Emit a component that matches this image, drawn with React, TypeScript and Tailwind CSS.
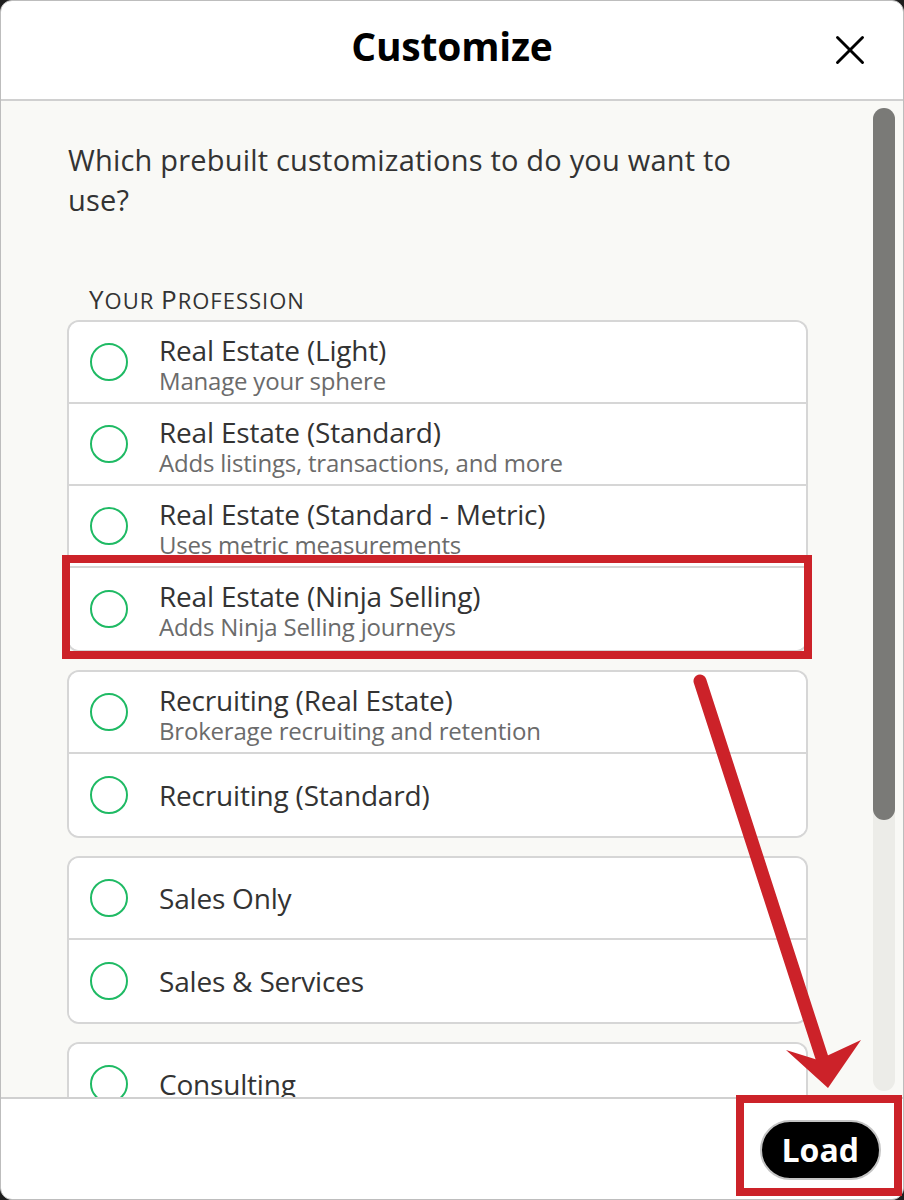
import { X } from "lucide-react";

type Option = { title: string; sub?: string };

const groups: Option[][] = [
  [
    { title: "Real Estate (Light)", sub: "Manage your sphere" },
    { title: "Real Estate (Standard)", sub: "Adds listings, transactions, and more" },
    { title: "Real Estate (Standard - Metric)", sub: "Uses metric measurements" },
    { title: "Real Estate (Ninja Selling)", sub: "Adds Ninja Selling journeys" },
  ],
  [
    { title: "Recruiting (Real Estate)", sub: "Brokerage recruiting and retention" },
    { title: "Recruiting (Standard)" },
  ],
  [{ title: "Sales Only" }, { title: "Sales & Services" }],
  [{ title: "Consulting" }, { title: "Coaching" }],
];

function OptionRow({ item }: { item: Option }) {
  return (
    <div className="h-[82px] flex items-center border-b-2 border-[#d6d6d6] last:border-b-0 bg-white">
      <div className="ml-[21px] w-[38px] h-[38px] shrink-0 rounded-full border-[2.5px] border-[#1fba64]" />
      {item.sub ? (
        <div className="ml-[31px] self-start pt-[11px] flex flex-col">
          <span className="text-[28px] leading-[34px] text-[#333] tracking-[-0.2px]">{item.title}</span>
          <span className="text-[24px] leading-[28px] text-[#6b6b6b] tracking-[-0.2px]">{item.sub}</span>
        </div>
      ) : (
        <span className="ml-[31px] text-[28px] leading-[34px] text-[#333] tracking-[-0.2px]">{item.title}</span>
      )}
    </div>
  );
}

export default function App() {
  return (
    <div className="relative w-[904px] h-[1200px] bg-[#1e1e1e] font-['Open_Sans',sans-serif]">
      <div className="w-full h-full rounded-[12px] border border-[#bdbdbd] bg-white flex flex-col overflow-hidden">
        {/* header */}
        <div className="relative h-[100px] shrink-0 border-b-2 border-[#d0d0d0] flex items-center justify-center">
          <h1 className="text-[39px] font-bold text-black tracking-[-0.2px] -mt-[8px]">Customize</h1>
          <button className="absolute right-[28px] top-[24px] text-black">
            <X size={50} strokeWidth={1.4} />
          </button>
        </div>

        {/* body */}
        <div className="h-[996px] shrink-0 bg-[#f9f9f6] flex overflow-hidden">
          <div className="pl-[67px] w-[806px] shrink-0 pt-[39px]">
            <p className="max-w-[690px] text-[29px] leading-[40px] text-[#333] tracking-[0.2px]">
              Which prebuilt customizations to do you want to use?
            </p>
            <div className="mt-[66px] mb-[9px] pl-[21px] text-[22px] leading-[26px] text-[#333] tracking-[1px]">
              <span className="text-[26px]">Y</span>OUR <span className="text-[26px]">P</span>ROFESSION
            </div>
            <div className="flex flex-col gap-[22px] px-[1px]">
              {groups.map((g, i) => (
                <div key={i} className="rounded-[10px] ring-2 ring-[#d6d6d6] overflow-hidden bg-white">
                  {g.map((item) => (
                    <OptionRow key={item.title} item={item} />
                  ))}
                </div>
              ))}
            </div>
          </div>
          <div className="ml-auto mr-[8px] mt-[7px] mb-[6px] w-[22px] rounded-full bg-[#ececE8] flex flex-col">
            <div className="h-[712px] rounded-full bg-[#7a7a77]" />
          </div>
        </div>

        {/* footer */}
        <div className="flex-1 border-t-2 border-[#d0d0d0] flex items-center justify-end pr-[22px]">
          <button className="h-[60px] px-[20px] rounded-full bg-black border-2 border-[#c4c4c4] text-white text-[32px] font-bold leading-none mt-[2px]">
            Load
          </button>
        </div>
      </div>

      {/* annotations */}
      <div className="absolute left-[62px] top-[555px] w-[750px] h-[104px] border-[8px] border-[#cc2229] pointer-events-none" />
      <div className="absolute left-[736px] top-[1095px] w-[166px] h-[101px] border-[8px] border-[#cc2229] pointer-events-none" />
      <svg className="absolute left-0 top-0 pointer-events-none" width="904" height="1200">
        <line x1="700" y1="681" x2="822" y2="1058" stroke="#cc2229" strokeWidth="13" strokeLinecap="round" />
        <polygon points="828,1088 786,1050 818,1060 861,1040" fill="#cc2229" />
      </svg>
    </div>
  );
}
